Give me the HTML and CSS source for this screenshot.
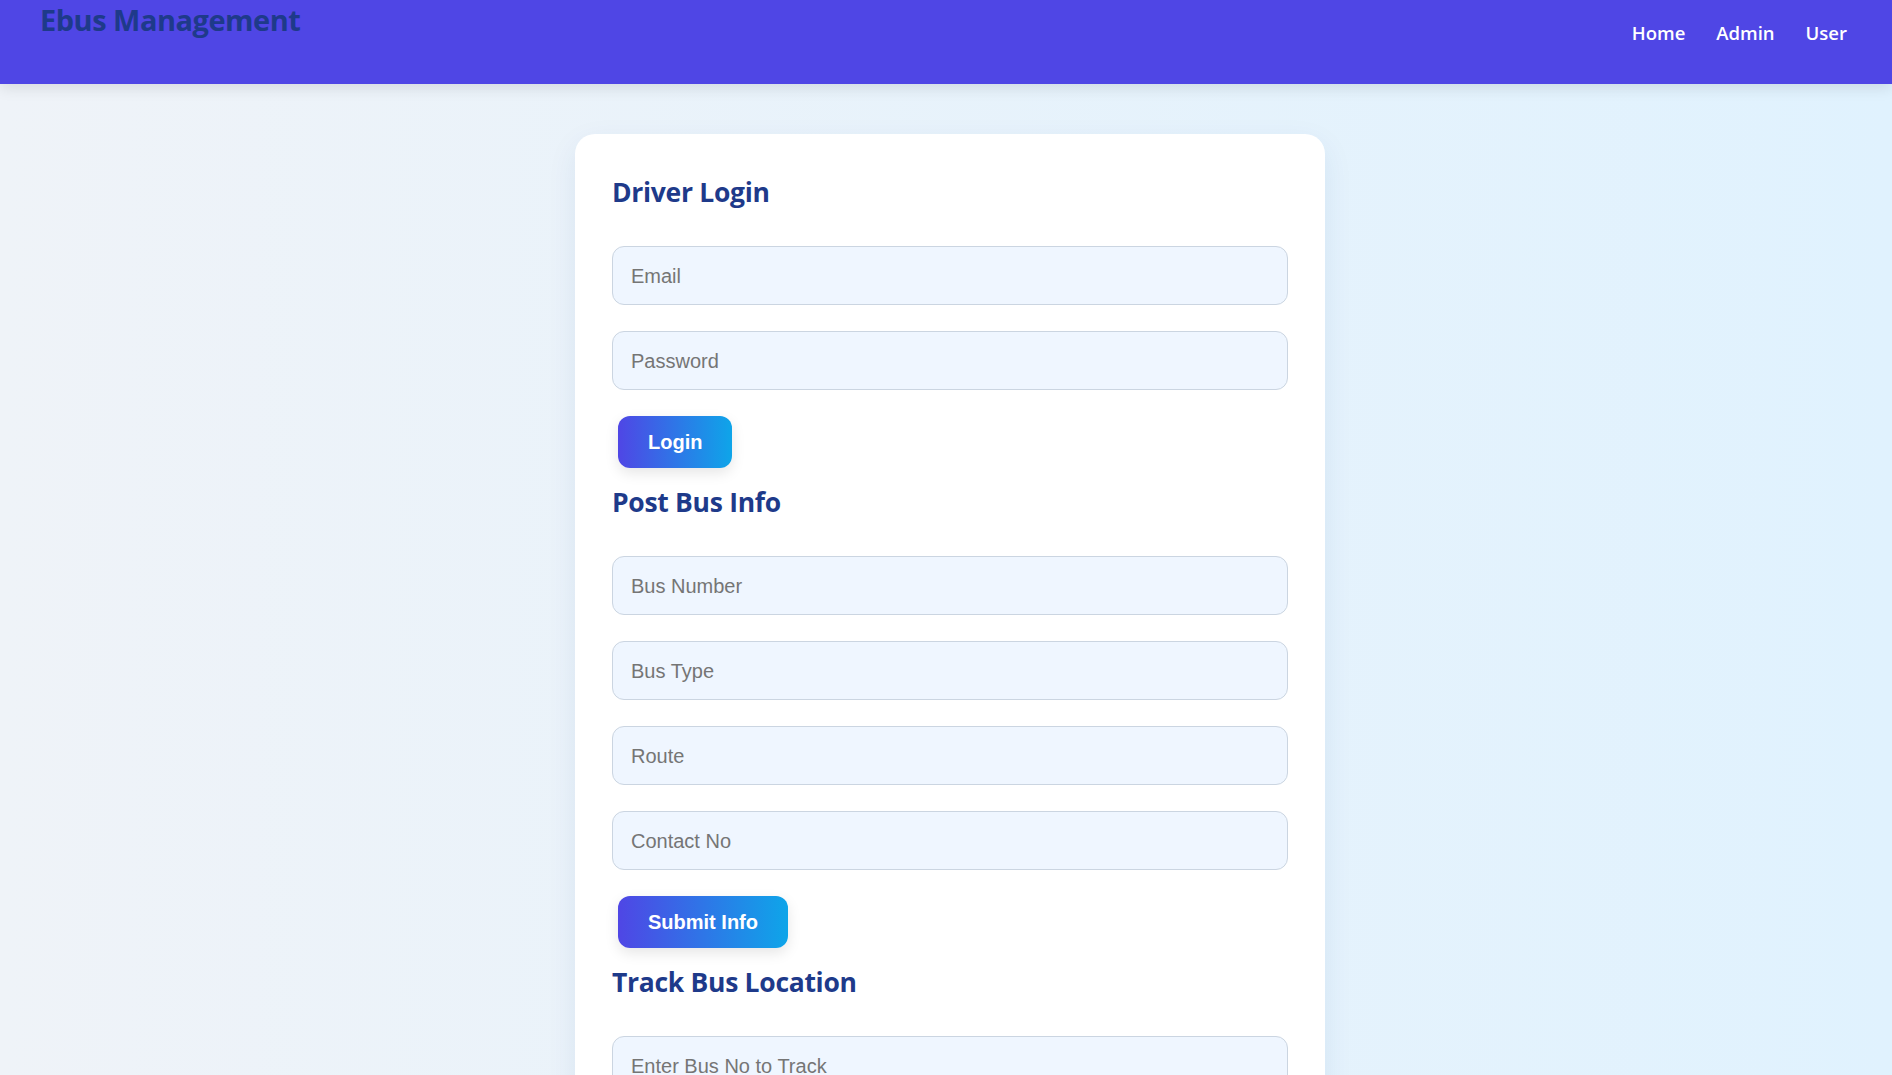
FILE: index.html
```html
<!DOCTYPE html>
<html lang="en">
<head>
<meta charset="utf-8">
<title>Ebus Management</title>
<link rel="stylesheet" href="styles.css">
</head>
<body>
<header class="topbar">
  <h1 class="brand">Ebus Management</h1>
  <nav class="nav">
    <a href="#" class="nav-link">Home</a>
    <a href="#" class="nav-link">Admin</a>
    <a href="#" class="nav-link">User</a>
  </nav>
</header>
<main class="card">
  <h2 class="section-title">Driver Login</h2>
  <input class="field" type="email" placeholder="Email">
  <input class="field" type="password" placeholder="Password">
  <button class="btn" type="button">Login</button>

  <h2 class="section-title">Post Bus Info</h2>
  <input class="field" type="text" placeholder="Bus Number">
  <input class="field" type="text" placeholder="Bus Type">
  <input class="field" type="text" placeholder="Route">
  <input class="field" type="text" placeholder="Contact No">
  <button class="btn" type="button">Submit Info</button>

  <h2 class="section-title">Track Bus Location</h2>
  <input class="field" type="text" placeholder="Enter Bus No to Track">
  <button class="btn" type="button">Track</button>
</main>
</body>
</html>
```
FILE: styles.css
```css
* { box-sizing: border-box; }

html, body { margin: 0; padding: 0; }

body {
  min-height: 100vh;
  background: linear-gradient(90deg, #eff3f8 0%, #e0f2fe 100%);
  font-family: "Open Sans", "Noto Sans", sans-serif;
}

.topbar {
  height: 84px;
  background: #4f46e5;
  display: flex;
  justify-content: space-between;
  align-items: flex-start;
  padding: 0 45px 0 40px;
  box-shadow: 0 4px 14px rgba(0, 0, 0, 0.10);
  position: relative;
  z-index: 1;
}

.brand {
  margin: 0;
  font-size: 29px;
  line-height: 40px;
  font-weight: 700;
  color: #1e3a8a;
  letter-spacing: -0.5px;
}

.nav {
  display: flex;
  gap: 31px;
  margin-top: 19px;
}

.nav-link {
  color: #ffffff;
  text-decoration: none;
  font-size: 18.5px;
  line-height: 28px;
  font-weight: 600;
}

.card {
  width: 750px;
  margin: 50px 0 0 calc(50% - 371px);
  background: #ffffff;
  border-radius: 20px;
  padding: 40px 37px 60px;
  box-shadow: 0 10px 30px rgba(30, 58, 138, 0.08);
  display: flex;
  flex-direction: column;
  align-items: flex-start;
}

.section-title {
  margin: 0 0 36px;
  font-size: 26.5px;
  line-height: 36px;
  font-weight: 700;
  color: #1e3a8a;
  letter-spacing: -0.3px;
}

.field {
  width: 100%;
  height: 59px;
  margin: 0 0 26px;
  padding: 18px 18px 16px;
  border: 1px solid #cbd5e1;
  border-radius: 12px;
  background: #eff6ff;
  font-family: "Liberation Sans", Arial, sans-serif;
  font-size: 20px;
  line-height: 23px;
  color: #1f2937;
  outline: none;
}

.field::placeholder { color: #757575; }

.btn {
  margin: 0 0 16px 6px;
  padding: 15px 30px;
  border: none;
  border-radius: 12px;
  background: linear-gradient(90deg, #4f46e5 0%, #0ea5e9 100%);
  color: #ffffff;
  font-family: "Liberation Sans", Arial, sans-serif;
  font-size: 20px;
  line-height: 22px;
  font-weight: 700;
  box-shadow: 0 5px 14px rgba(0, 0, 0, 0.10);
  cursor: pointer;
}
```
